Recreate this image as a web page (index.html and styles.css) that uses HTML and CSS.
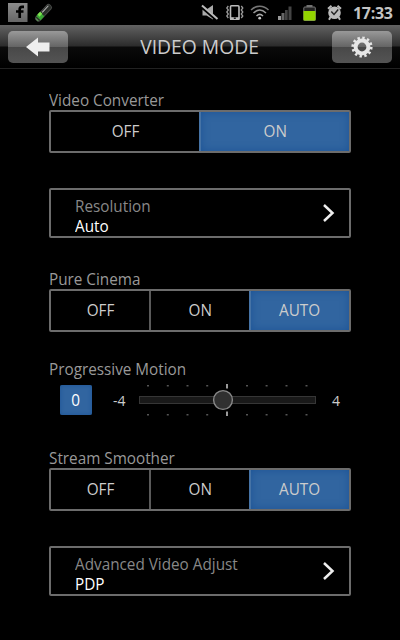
FILE: index.html
```html
<!DOCTYPE html>
<html lang="en">
<head>
    <meta charset="UTF-8">
    <meta name="viewport" content="width=device-width, initial-scale=1.0">
    <title>Video Mode</title>
    <link rel="stylesheet" href="styles.css">
</head>
<body>
    <div class="status-bar">
        <svg class="status-left" width="60" height="25" viewBox="0 0 60 25">
            <defs>
                <linearGradient id="fb" x1="0" y1="0" x2="0" y2="1">
                    <stop offset="0" stop-color="#8c8c8c"/>
                    <stop offset="1" stop-color="#666"/>
                </linearGradient>
            </defs>
            <rect x="8" y="3" width="19.5" height="19" fill="url(#fb)"/>
            <path d="M24 6.800h-1.800c-1.900 0-2.500.9-2.500 2.500v8.700M16 11.500h7.500" fill="none" stroke="#000" stroke-width="2.700"/>
            <g transform="rotate(43 43 13)">
                <rect x="40.500" y="2.500" width="5.500" height="20" rx="2" fill="#292d29" stroke="#484a48" stroke-width="1"/>
                <rect x="40.200" y="14.500" width="6" height="5.500" fill="#39a534"/>
                <rect x="40" y="14" width="3" height="4" fill="#7ee34f"/>
                <path d="M42 4v9" stroke="#bbb" stroke-width="1"/>
                <path d="M41.500 22h3.500" stroke="#5b8a55" stroke-width="1.500"/>
            </g>
        </svg>
        <svg class="status-icons" width="150" height="25" viewBox="200 0 150 25">
            <!-- muted -->
            <path d="M202.500 9.500h4l6.500-4.500v14.500l-6.500-4h-4z" fill="#aaa"/>
            <path d="M201.500 6.500l15.500 13.500" stroke="#000" stroke-width="3.500"/>
            <path d="M202 5.500l15.500 13.500" stroke="#bbb" stroke-width="2"/>
            <!-- vibrate -->
            <rect x="230.500" y="5.800" width="8.500" height="13.500" rx="1" fill="none" stroke="#bbb" stroke-width="1.600"/>
            <path d="M230 17.200h9.500v2.800h-9.500z" fill="#bbb"/>
            <path d="M233.800 17.500h2v1.500h-2z" fill="#222"/>
            <path d="M228.300 6l-1.500 2 1.500 2-1.500 2 1.500 2-1.500 2 1.500 2M241.300 6l1.500 2-1.500 2 1.500 2-1.500 2 1.500 2-1.500 2" fill="none" stroke="#999" stroke-width="1.300"/>
            <!-- wifi -->
            <g fill="none" stroke="#777" stroke-width="1.500">
                <path d="M251 10c5-5 12.500-5 17.500 0"/>
                <path d="M253.500 13c4-3.800 8.500-3.800 12.500 0" stroke="#999"/>
                <path d="M256.500 16c2-2 4.500-2 6.500 0" stroke="#aaa"/>
            </g>
            <circle cx="259.700" cy="18.200" r="1.400" fill="#ccc"/>
            <!-- signal -->
            <rect x="278" y="16" width="3" height="4" fill="#999"/>
            <rect x="281.500" y="13" width="3" height="7" fill="#666"/>
            <rect x="285" y="10" width="2.700" height="10" fill="#444"/>
            <rect x="288.500" y="6.500" width="3" height="13.500" fill="#444"/>
            <!-- battery -->
            <path d="M306.500 6h6" stroke="#999" stroke-width="1.500"/>
            <rect x="303.800" y="7" width="11.500" height="13.500" rx="1" fill="#222" stroke="#777"/>
            <rect x="303.500" y="11" width="12" height="9.500" fill="#92d400"/>
            <!-- alarm -->
            <circle cx="334.500" cy="12.800" r="6.300" fill="#bbb"/>
            <path d="M331.300 11.500l2.700 3 4.200-5" fill="none" stroke="#222" stroke-width="1.400"/>
            <path d="M328 8.800l3.500-3M341 8.800l-3.500-3M330.500 17l-1.500 2.700M338.500 17l1.500 2.700" stroke="#bbb" stroke-width="2"/>
        </svg>
        <span class="clock">17:33</span>
    </div>

    <div class="header">
        <button class="header-btn">
            <svg width="24" height="20" viewBox="0 0 24 20">
                <path d="M0 10L12 0.500V5.500h11.500v9H12v5z" fill="#eee"/>
            </svg>
        </button>
        <h1><span class="text">VIDEO MODE</span></h1>
        <button class="header-btn">
            <svg width="22" height="22" viewBox="-11 -11 22 22">
                <circle r="6.400" fill="none" stroke="#e6e6e6" stroke-width="4"/>
                <circle r="9.200" fill="none" stroke="#e6e6e6" stroke-width="2.800" stroke-dasharray="2.400 2.417"/>
            </svg>
        </button>
    </div>

    <div class="settings">
        <div class="label"><span class="text">Video Converter</span></div>
        <div class="switch">
            <div class="option"><span class="text">OFF</span></div>
            <div class="option active"><span class="text">ON</span></div>
        </div>

        <div class="link-row link-first">
            <div class="link-text">
                <div class="link-title"><span class="text">Resolution</span></div>
                <div class="link-value"><span class="text">Auto</span></div>
            </div>
            <svg width="12" height="20" viewBox="0 0 12 20">
                <path d="M1 2l8.500 8L1 18" fill="none" stroke="#eee" stroke-width="2.500"/>
            </svg>
        </div>

        <div class="label"><span class="text">Pure Cinema</span></div>
        <div class="switch">
            <div class="option"><span class="text">OFF</span></div>
            <div class="option"><span class="text">ON</span></div>
            <div class="option active"><span class="text">AUTO</span></div>
        </div>

        <div class="label label-motion"><span class="text">Progressive Motion</span></div>
        <div class="slider">
            <div class="slider-value"><span class="text">0</span></div>
            <span class="slider-min">-4</span>
            <svg width="178" height="40" viewBox="139 380 178 40">
                <g fill="#555">
                    <path d="M147 385h2v1.500h-2zM166.800 385h2v1.500h-2zM186.500 385h2v1.500h-2zM206.200 385h2v1.500h-2zM246 385h2v1.500h-2zM265.600 385h2v1.500h-2zM285.500 385h2v1.500h-2zM305.500 385h2v1.500h-2z"/>
                    <path d="M147 414h2v1.500h-2zM166.800 414h2v1.500h-2zM186.500 414h2v1.500h-2zM206.200 414h2v1.500h-2zM246 414h2v1.500h-2zM265.600 414h2v1.500h-2zM285.500 414h2v1.500h-2zM305.500 414h2v1.500h-2z"/>
                </g>
                <path d="M227 384v4.500M227 411.500v4.500" stroke="#aaa" stroke-width="1.800"/>
                <rect x="139.500" y="396.500" width="176" height="7" fill="#191919" stroke="#363636"/>
                <circle cx="223" cy="400" r="9.400" fill="#303030" stroke="#888" stroke-width="1.400"/>
            </svg>
            <span class="slider-max">4</span>
        </div>

        <div class="label label-stream"><span class="text">Stream Smoother</span></div>
        <div class="switch">
            <div class="option"><span class="text">OFF</span></div>
            <div class="option"><span class="text">ON</span></div>
            <div class="option active"><span class="text">AUTO</span></div>
        </div>

        <div class="link-row link-last">
            <div class="link-text">
                <div class="link-title"><span class="text">Advanced Video Adjust</span></div>
                <div class="link-value"><span class="text">PDP</span></div>
            </div>
            <svg width="12" height="20" viewBox="0 0 12 20">
                <path d="M1 2l8.500 8L1 18" fill="none" stroke="#eee" stroke-width="2.500"/>
            </svg>
        </div>
    </div>
</body>
</html>
```
FILE: styles.css
```css
* {
    box-sizing: border-box;
}

body {
    margin: 0;
    width: 400px;
    height: 640px;
    overflow: hidden;
    background: #000;
    color: #ccc;
    font-family: "Open Sans", "Noto Sans", sans-serif;
    font-size: 16px;
}

svg {
    display: block;
    flex: none;
}

/* slightly condensed lettering */
.text {
    display: inline-block;
    transform: scaleX(0.955);
}

.status-bar {
    display: flex;
    height: 25px;
}

.status-icons {
    margin-left: 140px;
}

.clock {
    margin-left: 3px;
    color: #c4c4c4;
    font-size: 16px;
    font-weight: 700;
    letter-spacing: -0.3px;
    line-height: 26px;
}

.header {
    display: flex;
    align-items: center;
    justify-content: space-between;
    height: 44px;
    padding: 0 8px;
    background: linear-gradient(#626262, #2c2c2c 21px, #0a0a0a 22px, #000 43px);
    border-bottom: 1px solid #222;
}

.header h1 {
    margin: 0;
    color: #ccc;
    font-size: 20px;
    font-weight: 400;
    line-height: 44px;
}

.header h1 .text {
    transform: scaleX(0.965);
}

.header-btn {
    display: flex;
    align-items: center;
    justify-content: center;
    width: 60px;
    height: 32px;
    padding: 0;
    border: none;
    border-radius: 5px;
    background: linear-gradient(#999, #656565 49%, #484848 50%, #545454);
}

.settings {
    padding: 21px 49px 0;
}

.label {
    height: 20px;
    color: #999;
    line-height: 20px;
    white-space: nowrap;
}

.label .text,
.link-text .text {
    transform-origin: left;
}

.switch {
    display: flex;
    height: 43px;
    border: 2px solid #6c6c6c;
    border-radius: 2px;
}

.option {
    flex: 1;
    text-align: center;
    line-height: 39px;
}

.option + .option {
    border-left: 2px solid #5a5a5a;
}

.option.active {
    border-left-color: #4673a5;
    background: #3165a0;
    box-shadow: inset 0 0 9px #1d5496;
}

.link-row {
    display: flex;
    justify-content: space-between;
    height: 50px;
    padding: 0 14px 0 24px;
    align-items: center;
    border: 2px solid #6c6c6c;
    border-radius: 2px;
    white-space: nowrap;
}

.link-first {
    margin: 35px 0 31px;
}

.link-last {
    margin-top: 35px;
}

.link-text {
    padding-top: 6px;
}

.link-title,
.link-value {
    height: 20px;
    line-height: 20px;
}

.link-title {
    color: #888;
}

.link-value {
    color: #fff;
}

.label-motion {
    margin-top: 27px;
}

.label-stream {
    margin-top: 28px;
}

.slider {
    display: flex;
    align-items: center;
    height: 40px;
    margin-top: 1px;
    padding-left: 11px;
    font-size: 14px;
}

.slider-value {
    width: 32px;
    height: 30px;
    border-radius: 2px;
    background: #3165a0;
    box-shadow: inset 0 0 4px #1d5496;
    color: #fff;
    font-size: 16px;
    line-height: 30px;
    text-align: center;
}

.slider-min {
    width: 47px;
    padding-left: 21px;
}

.slider-max {
    margin-left: 15px;
}
```
